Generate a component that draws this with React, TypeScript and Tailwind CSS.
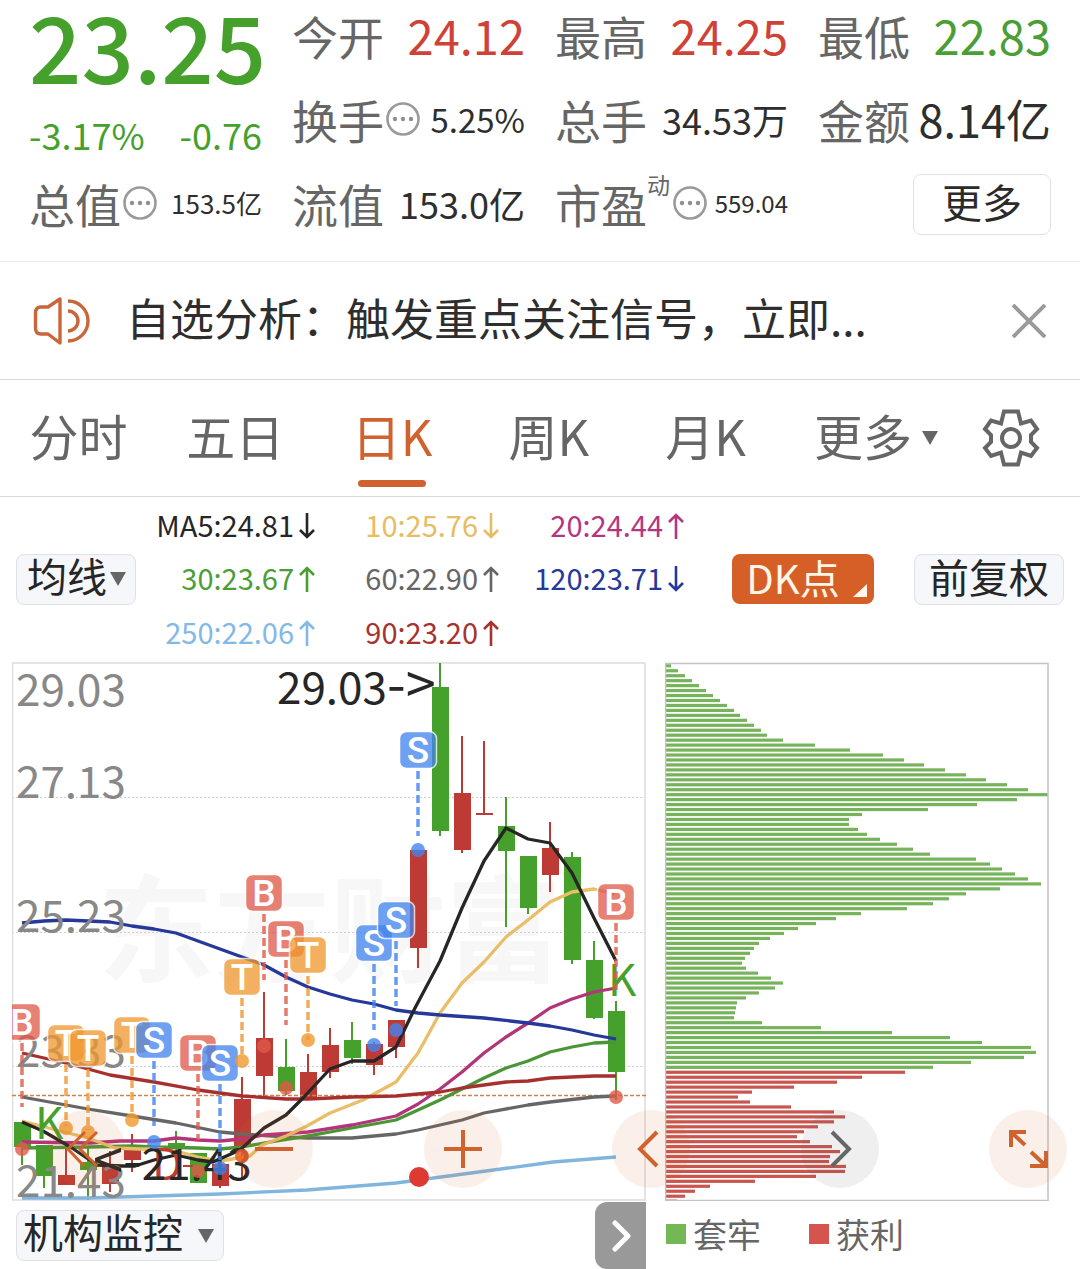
import type { ReactNode } from "react";

const GREEN = "#46a02c";
const RED = "#be3b35";

const STATS = [
  { label: "今开", value: "24.12", cls: "text-[47px] text-[#cf4238]" },
  { label: "最高", value: "24.25", cls: "text-[47px] text-[#cf4238]" },
  { label: "最低", value: "22.83", cls: "text-[47px] text-[#4a9e35]" },
  { label: "换手", value: "5.25%", cls: "text-[33px] text-[#2e2e2e]", info: true },
  { label: "总手", value: "34.53万", cls: "text-[36px] text-[#2e2e2e]" },
  { label: "金额", value: "8.14亿", cls: "text-[45px] text-[#2e2e2e]" },
  { label: "总值", value: "153.5亿", cls: "text-[26px] text-[#2e2e2e]", info: true },
  { label: "流值", value: "153.0亿", cls: "text-[36px] text-[#2e2e2e]" },
  { label: "市盈", sup: "动", value: "559.04", cls: "text-[24px] text-[#2e2e2e]", info: true },
];

const TABS = ["分时", "五日", "日K", "周K", "月K"];

const AVERAGES = [
  { text: "MA5:24.81", up: false, cls: "text-[#262626]" },
  { text: "10:25.76", up: false, cls: "text-[#e6bd62]" },
  { text: "20:24.44", up: true, cls: "text-[#b5367f]" },
  { text: "30:23.67", up: true, cls: "text-[#4a9e35]" },
  { text: "60:22.90", up: true, cls: "text-[#666666]" },
  { text: "120:23.71", up: false, cls: "text-[#26389a]" },
  { text: "250:22.06", up: true, cls: "text-[#82b9e6]" },
  { text: "90:23.20", up: true, cls: "text-[#a63330]" },
];

// x, colour, body top, body bottom, wick top, wick bottom
const CANDLES: [number, "g" | "r", number, number, number, number][] = [
  [22, "g", 1122, 1147, 1122, 1165],
  [44, "g", 1145, 1176, 1145, 1188],
  [66, "r", 1175, 1185, 1148, 1185],
  [88, "g", 1162, 1170, 1148, 1200],
  [110, "r", 1165, 1184, 1151, 1192],
  [132, "r", 1147, 1160, 1134, 1172],
  [176, "g", 1143, 1149, 1131, 1151],
  [198, "g", 1153, 1183, 1153, 1183],
  [220, "r", 1164, 1186, 1164, 1188],
  [242, "r", 1099, 1147, 1077, 1178],
  [264, "r", 1038, 1076, 992, 1096],
  [286, "g", 1067, 1091, 1039, 1095],
  [308, "r", 1072, 1100, 1054, 1100],
  [330, "r", 1045, 1072, 1028, 1078],
  [352, "g", 1040, 1058, 1022, 1064],
  [374, "r", 1044, 1065, 1042, 1075],
  [396, "r", 1020, 1047, 1020, 1058],
  [418, "r", 850, 948, 850, 968],
  [440, "g", 687, 831, 663, 836],
  [462, "r", 793, 850, 736, 853],
  [484, "r", 813, 815, 741, 815],
  [506, "g", 826, 851, 797, 927],
  [528, "g", 856, 908, 856, 914],
  [550, "r", 848, 875, 822, 892],
  [572, "g", 857, 960, 852, 964],
  [594, "g", 960, 1018, 941, 1019],
  [616, "g", 1011, 1072, 1001, 1100],
];

const LINES = [
  { color: "#82b5de", pts: "22,1198 88,1198 154,1196 220,1194 307,1190 396,1183 486,1171 553,1162 616,1157" },
  { color: "#666666", pts: "22,1097 88,1109 132,1116 176,1123 220,1132 242,1134 286,1137 308,1138 352,1138 396,1134 418,1130 462,1120 484,1113 528,1105 550,1102 594,1097 616,1096" },
  { color: "#4a9636", pts: "22,1148 88,1147 132,1146 154,1147 198,1148 220,1149 242,1147 264,1143 308,1136 330,1132 396,1120 418,1110 440,1100 462,1089 484,1078 506,1068 528,1061 550,1052 572,1047 594,1043 616,1042" },
  { color: "#b23579", pts: "22,1142 90,1143 120,1141 154,1141 176,1138 198,1140 220,1141 242,1139 264,1135 308,1132 352,1125 396,1116 418,1104 440,1089 462,1072 484,1053 506,1037 528,1023 550,1008 572,999 594,992 616,988" },
  { color: "#e8bf68", pts: "22,1121 60,1131 88,1138 115,1148 140,1149 160,1149 180,1152 198,1157 220,1161 250,1156 262,1145 286,1136 307,1126 330,1113 363,1100 396,1082 418,1053 440,1013 462,983 484,962 506,937 528,920 550,902 572,892 594,889 615,894" },
  { color: "#a6302e", pts: "22,1053 66,1063 110,1075 154,1082 198,1090 242,1096 286,1099 308,1099 352,1097 396,1096 440,1092 462,1088 506,1082 528,1081 550,1078 572,1077 594,1076 616,1076" },
  { color: "#26389a", pts: "22,923 44,921 66,920 88,921 110,922 132,926 154,929 176,933 198,941 220,949 242,957 264,965 286,977 308,987 330,994 352,1000 374,1004 396,1010 418,1013 440,1015 484,1018 528,1023 550,1026 572,1030 594,1035 616,1039" },
  { color: "#262626", pts: "22,1122 43,1131 55,1138 72,1148 97,1165 122,1166 135,1166 154,1160 176,1155 198,1160 213,1162 240,1150 264,1128 286,1115 303,1098 330,1069 352,1061 374,1061 396,1047 415,1008 440,961 462,908 484,861 506,828 528,839 550,843 572,873 594,918 616,961" },
];

// kind, x, badge centre, end of the dashed stem, dot centre
const MARKERS: ["B" | "S" | "T", number, number, number, number][] = [
  ["B", 22, 1022, 1107, 1149],
  ["T", 66, 1043, 1126, 1128],
  ["T", 88, 1048, 1130, 1132],
  ["T", 132, 1035, 1118, 1120],
  ["S", 154, 1040, 1126, 1142],
  ["B", 198, 1053, 1140, 1171],
  ["S", 220, 1063, 1160, 1168],
  ["T", 242, 977, 1058, 1061],
  ["B", 264, 893, 980, 1046],
  ["B", 286, 939, 1025, 1088],
  ["T", 308, 955, 1040, 1040],
  ["S", 374, 943, 1030, 1045],
  ["S", 396, 920, 1006, 1030],
  ["S", 418, 750, 836, 850],
  ["B", 616, 902, 990, 1097],
];

const MARKER_FILL = { B: "#e05a48", S: "#4384ee", T: "#f0982f" };

const TRAPPED = [
  5, 12, 19, 26, 33, 40, 47, 54, 61, 68, 74, 81, 88, 95, 101, 117, 149, 184, 217, 238, 258, 279, 300, 320, 341, 362,
  382, 351, 311, 262, 196, 183, 183, 192, 201, 214, 231, 247, 264, 310, 324, 336, 349, 362, 375, 334, 300, 283, 267,
  241, 195, 170, 150, 132, 118, 104, 93, 88, 84, 79, 76, 80, 92, 105, 117, 109, 93, 80, 71, 70, 69, 68, 96, 155, 226,
  284, 316, 365, 370, 358, 305, 267,
];

const PROFIT = [
  239, 196, 171, 128, 86, 72, 84, 125, 168, 179, 168, 152, 138, 131, 144, 166, 174, 164, 163, 180, 179, 150, 89, 44,
  29, 19, 11,
];

const AXIS = [
  ["29.03", 706],
  ["27.13", 798],
  ["25.23", 932],
  ["23.33", 1067],
  ["21.43", 1197],
] as const;

function Info() {
  return (
    <svg className="w-[34px] h-[34px] ml-0.5 shrink-0" viewBox="0 0 34 34" fill="none">
      <circle cx="17" cy="17" r="15.5" stroke="#9a9a9a" strokeWidth="2.6" />
      <circle cx="9" cy="17" r="2.2" fill="#8f8f8f" />
      <circle cx="17" cy="17" r="2.2" fill="#8f8f8f" />
      <circle cx="25" cy="17" r="2.2" fill="#8f8f8f" />
    </svg>
  );
}

function Caret({ className }: { className: string }) {
  return (
    <svg className={className} viewBox="0 0 16 14">
      <path d="M0 0H16L8 14Z" fill="#666" />
    </svg>
  );
}

function Quote() {
  return (
    <section className="grid grid-cols-4 gap-x-[30px] gap-y-2 px-[29px] pb-[17px] border-b border-[#ececec]">
      <div className="row-span-2 h-40 text-[#46a02c]">
        <div className="text-[92px] font-medium leading-[88px] text-center">23.25</div>
        <div className="flex justify-between text-[36px] leading-[92px]">
          <span>-3.17%</span>
          <span>-0.76</span>
        </div>
      </div>
      {STATS.map((s) => (
        <div key={s.label} className="flex items-center h-[76px] pb-1.5 whitespace-nowrap">
          <span className="text-[46px] leading-[70px] text-[#666]">{s.label}</span>
          {s.sup && <span className="self-start w-6 text-[23px] leading-8 text-[#666]">{s.sup}</span>}
          {s.info && <Info />}
          <span className={`ml-auto leading-[70px] ${s.cls}`}>{s.value}</span>
        </div>
      ))}
      <div className="flex items-center justify-end h-[76px] pb-1">
        <button className="w-[138px] h-[61px] pb-1.5 rounded-lg border border-[#e2e2e2] text-[40px] leading-[50px] text-[#2b2b2b]">
          更多
        </button>
      </div>
    </section>
  );
}

function Notice() {
  return (
    <section className="flex items-center h-[118px] px-8 border-b border-[#d9d9d9]">
      <svg className="w-[60px] h-[50px] shrink-0" viewBox="0 0 60 50" fill="none" stroke="#c8673a" strokeWidth="3.4">
        <path d="M28 3V47L16 38H9Q3.500 38 3.500 32V17Q3.500 11 9 11H16Z" strokeLinejoin="round" />
        <path d="M36 15A10 10 0 0 1 36 35M36 5A20 20 0 0 1 36 45" />
      </svg>
      <p className="flex-1 ml-[34px] pb-2 text-[44px] leading-[100px] text-[#2e2e2e] truncate">
        自选分析：触发重点关注信号，立即...
      </p>
      <button aria-label="关闭" className="p-0.5">
        <svg className="w-[34px] h-[34px]" viewBox="0 0 34 34" stroke="#9a9a9a" strokeWidth="4">
          <path d="M1 1L33 33M33 1L1 33" />
        </svg>
      </button>
    </section>
  );
}

function Tabs() {
  return (
    <nav className="flex h-[117px] pr-[26px] border-b border-[#d9d9d9] text-[49px] leading-[80px] text-[#666]">
      {TABS.map((t) => {
        const active = t === "日K";
        return (
          <button
            key={t}
            className={`relative flex-1 pb-1.5 whitespace-nowrap ${active ? "text-[#d0622f]" : ""}`}
          >
            {t}
            {active && (
              <span className="absolute left-1/2 bottom-[9px] w-[68px] h-[7px] -translate-x-1/2 rounded-full bg-[#d0622f]" />
            )}
          </button>
        );
      })}
      <button className="flex items-center justify-center gap-2.5 w-[184px]">
        <span className="pb-1.5">更多</span>
        <Caret className="w-4 h-[14px]" />
      </button>
      <button aria-label="设置" className="flex items-center justify-center w-[86px]">
        <svg className="w-[60px] h-[60px]" viewBox="0 0 60 60" fill="none" stroke="#666" strokeWidth="4">
          <path d="M23 3.500H37L40 15.500L50 12.500L56 21L50 27V34L56 40L50 48L40 44.500L37 56.500H23L20 44.500L10 48L4 40L10 34V27L4 21L10 12.500L20 15.500Z" />
          <circle cx="30" cy="30" r="9" />
        </svg>
      </button>
    </nav>
  );
}

function Averages() {
  return (
    <section className="flex items-center h-[165px] px-4">
      <label className="relative shrink-0">
        <select
          aria-label="均线"
          className="appearance-none block w-[120px] h-[51px] pl-2.5 pb-2 rounded-lg border border-[#dfe1e5] bg-[#f6f7fa] text-[40px] leading-[41px] text-[#262626]"
        >
          <option>均线</option>
        </select>
        <Caret className="absolute right-2.5 top-[18px] w-4 h-[14px] pointer-events-none" />
      </label>
      <div className="grid grid-cols-[180px_184px_185px] h-[161px] items-center">
        {AVERAGES.map((a) => (
          <div key={a.text} className={`flex items-center justify-end gap-1 text-[29px] leading-[46px] ${a.cls}`}>
            <span className="pb-1">{a.text}</span>
            <svg className="w-[18px] h-[26px]" viewBox="0 0 18 26" fill="none" stroke="currentColor" strokeWidth="2.6">
              <path d={a.up ? "M9 26V2M2 9L9 2L16 9" : "M9 0V24M2 17L9 24L16 17"} />
            </svg>
          </div>
        ))}
      </div>
      <div className="flex gap-10 ml-auto">
        <button className="relative w-[142px] h-[50px] pr-5 pb-1 rounded-lg bg-[#d65f28] text-[40px] leading-[46px] text-[#fff6e8] whitespace-nowrap">
          DK点
          <svg className="absolute right-[7px] bottom-[7px] w-[14px] h-[13px]" viewBox="0 0 14 13">
            <path d="M14 0V13H0Z" fill="#fff6ee" />
          </svg>
        </button>
        <button className="w-[150px] h-[51px] pb-1.5 rounded-lg border border-[#dfe1e5] bg-[#f6f7fa] text-[40px] leading-[43px] text-[#262626] whitespace-nowrap">
          前复权
        </button>
      </div>
    </section>
  );
}

function KLine() {
  return (
    <svg className="block flex-[634] min-w-0" viewBox="12 662 634 539">
      <text x="98" y="973" fontSize="116" fontWeight="700" fill="#f7f7f7">
        东方财富
      </text>
      {[797, 932, 1066].map((y) => (
        <line key={y} x1="12" x2="646" y1={y + 0.5} y2={y + 0.5} stroke="#cfcfcf" strokeDasharray="2 2" />
      ))}
      <rect x="12.500" y="663" width="632.500" height="537" fill="none" stroke="#dcdcdc" strokeWidth="1.500" />

      {CANDLES.map(([x, c, top, bottom, hi, lo]) => (
        <g key={x} fill={c === "g" ? GREEN : RED}>
          <rect x={x - 1} y={hi} width="2" height={lo - hi} />
          <rect x={x - 8} y={top} width="17" height={bottom - top} />
        </g>
      ))}
      <line x1="183" x2="193" y1="1166" y2="1166" stroke={RED} strokeWidth="2" />

      <line x1="12" x2="646" y1="1095.500" y2="1095.500" stroke="#c8834f" strokeWidth="1.500" strokeDasharray="4 2" />
      {LINES.map((l) => (
        <polyline key={l.color} points={l.pts} fill="none" stroke={l.color} strokeWidth="3.300" strokeLinejoin="round" />
      ))}

      {AXIS.map(([t, y]) => (
        <text key={t} x="16" y={y} fontSize="44" fill="#888888">
          {t}
        </text>
      ))}
      <g fontSize="44" fill={GREEN}>
        <text x="35" y="1139">K</text>
        <text x="608" y="996">K</text>
      </g>
      <text x="152" y="1180" fontSize="44" fill={RED}>D</text>
      <text x="277" y="704" fontSize="44" fill="#262626">
        29.03<tspan fontSize="54">{"->"}</tspan>
      </text>
      <text x="93" y="1180" fontSize="44" fill="#262626">
        <tspan fontSize="54">{"<-"}</tspan>21.43
      </text>

      {MARKERS.map(([kind, x, y, stem, dot]) => (
        <g key={x} fill={MARKER_FILL[kind]}>
          <line x1={x} x2={x} y1={y + 21} y2={stem} stroke={MARKER_FILL[kind]} strokeWidth="3.500" strokeDasharray="8 4" opacity="0.8" />
          <circle cx={x} cy={dot} r="7" opacity="0.8" />
          <rect x={x - 18.5} y={y - 18.5} width="37" height="37" rx="7" stroke="#fff" strokeWidth="1.500" opacity="0.76" />
          <text
            x={x}
            y={y + 13}
            fontSize="37"
            textAnchor="middle"
            fill="#ffffff"
            className="font-['Roboto',sans-serif] font-medium"
          >
            {kind}
          </text>
        </g>
      ))}
      <circle cx="242" cy="1156" r="7" fill="#e8622c" opacity="0.85" />
      <circle cx="419" cy="1177" r="10" fill="#dd3a32" />
    </svg>
  );
}

function ChipChart() {
  const rows = [...TRAPPED, ...PROFIT];
  return (
    <svg className="block flex-[384] min-w-0" viewBox="0 0 384 539">
      {rows.map((w, i) => (
        <rect
          key={i}
          x="1"
          y={2.2 + i * 4.957}
          width={w}
          height="3.200"
          fill={i < TRAPPED.length ? "#76b35b" : "#c9554f"}
        />
      ))}
      <path d="M0.500 538.500V1.500H383V538.500Z" fill="none" stroke="#c4c4c4" strokeWidth="1.500" />
    </svg>
  );
}

function RoundButton({ label, gray, children }: { label: string; gray?: boolean; children: ReactNode }) {
  return (
    <button
      aria-label={label}
      className={`w-[78px] h-[78px] rounded-full ${gray ? "bg-[#666666]/10 text-[#666]" : "bg-[#d9622a]/10 text-[#d0622f]"}`}
    >
      <svg className="w-full h-full" viewBox="0 0 78 78" fill="none" stroke="currentColor" strokeWidth="4">
        {children}
      </svg>
    </button>
  );
}

function Charts() {
  return (
    <section className="relative flex items-start gap-[19px] pl-3 pr-[31px]">
      <KLine />
      <ChipChart />
      <div className="absolute left-[47px] right-[13px] bottom-[13px] flex justify-between">
        <RoundButton label="快退">
          <path d="M38 22L21 39L37 56M50 22L33 39L50 56" strokeWidth="3" />
        </RoundButton>
        <RoundButton label="缩小">
          <path d="M20 39H58" />
        </RoundButton>
        <RoundButton label="放大">
          <path d="M20 39H58M39 20V58" />
        </RoundButton>
        <RoundButton label="向左">
          <path d="M45 22L28 39L45 56" />
        </RoundButton>
        <RoundButton label="向右" gray>
          <path d="M31 22L48 39L31 56" />
        </RoundButton>
        <RoundButton label="全屏">
          <path d="M37 22H22V37M23 23L36 35M42 42L56 55M57 41V56H41" />
        </RoundButton>
      </div>
    </section>
  );
}

function Footer() {
  return (
    <section className="flex items-start pl-4">
      <label className="relative mt-[9px]">
        <select
          aria-label="指标"
          className="appearance-none block w-[208px] h-[51px] pl-1.5 pb-2 rounded-lg border border-[#dfe1e5] bg-[#f6f7fa] text-[40px] leading-[41px] text-[#262626]"
        >
          <option>机构监控</option>
        </select>
        <Caret className="absolute right-2.5 top-[19px] w-4 h-[14px] pointer-events-none" />
      </label>
      <button
        aria-label="下一页"
        className="flex items-center justify-center w-[51px] h-[67px] mt-px ml-auto rounded-l-xl bg-[#999]"
      >
        <svg className="w-5 h-8" viewBox="0 0 20 32" fill="none" stroke="#fff" strokeWidth="5" strokeLinecap="round" strokeLinejoin="round">
          <path d="M4 3L17 16L4 29" />
        </svg>
      </button>
      <div className="flex items-center gap-12 w-[434px] pl-5 text-[34px] leading-[66px] text-[#666]">
        <span className="flex items-center gap-[7px]">
          <i className="w-5 h-5 bg-[#74b856]" />
          套牢
        </span>
        <span className="flex items-center gap-[7px]">
          <i className="w-5 h-5 bg-[#d6544e]" />
          获利
        </span>
      </div>
    </section>
  );
}

export default function App() {
  return (
    <main className="bg-white overflow-hidden font-['Noto_Sans_CJK_SC',sans-serif]">
      <Quote />
      <Notice />
      <Tabs />
      <Averages />
      <Charts />
      <Footer />
    </main>
  );
}
